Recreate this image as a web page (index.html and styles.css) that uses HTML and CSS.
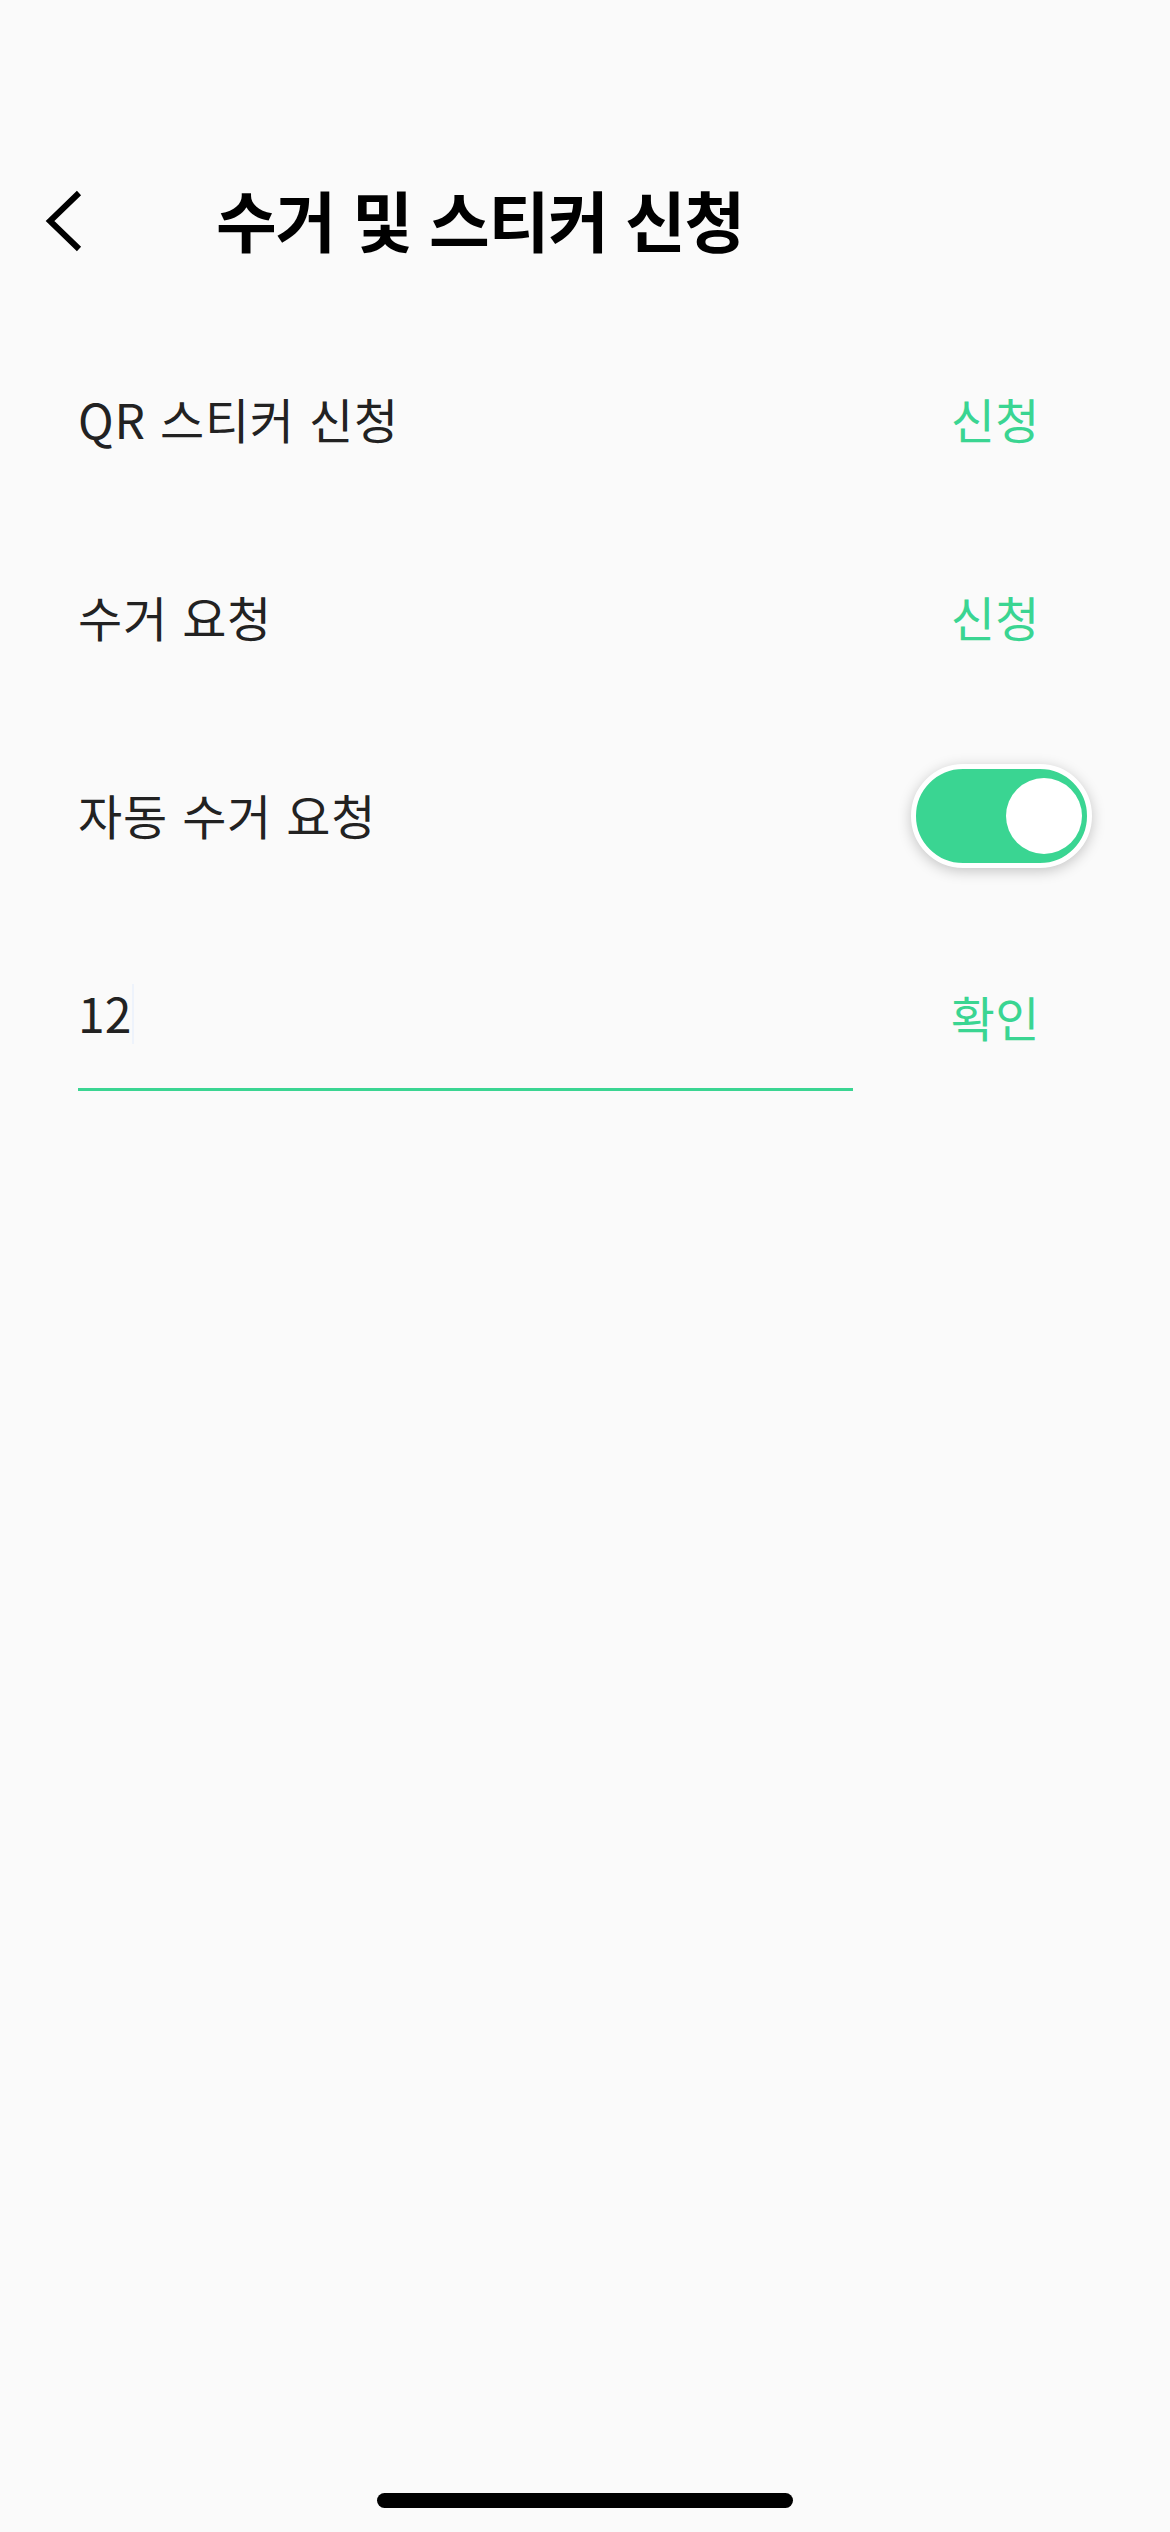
FILE: index.html
```html
<!DOCTYPE html>
<html lang="ko">
<head>
<meta charset="utf-8">
<link rel="stylesheet" href="styles.css">
</head>
<body>
<div class="screen">
  <header class="header">
    <button class="back" aria-label="뒤로">
      <svg width="40" height="62" viewBox="0 0 40 62"><polyline points="35,3 6,31 35,59" fill="none" stroke="#000" stroke-width="6"/></svg>
    </button>
    <h1 class="title">수거 및 스티커 신청</h1>
  </header>
  <main class="list">
    <div class="row">
      <span class="label">QR 스티커 신청</span>
      <span class="action">신청</span>
    </div>
    <div class="row">
      <span class="label">수거 요청</span>
      <span class="action">신청</span>
    </div>
    <div class="row toggle-row">
      <span class="label">자동 수거 요청</span>
      <span class="toggle"><span class="thumb"></span></span>
    </div>
    <div class="row input-row">
      <div class="field"><span class="value">12</span><span class="caret"></span></div>
      <span class="action">확인</span>
    </div>
  </main>
  <div class="home-bar"></div>
</div>
</body>
</html>
```

FILE: styles.css
```css
html, body {
  margin: 0;
  padding: 0;
  background: #fafafa;
}
.screen {
  width: 1170px;
  height: 2532px;
  display: flex;
  flex-direction: column;
  font-family: "Noto Sans CJK KR", "Noto Sans", sans-serif;
  color: #222;
}
.header {
  display: flex;
  align-items: center;
  padding: 186px 0 0 44px;
  height: 64px;
  margin-bottom: 69px;
}
.back {
  border: 0;
  background: none;
  padding: 0;
  width: 40px;
  height: 62px;
  display: flex;
  margin-top: 6px;
}
.title {
  margin: 0 0 0 132px;
  font-size: 66px;
  font-weight: 700;
  line-height: 64px;
  color: #000;
  letter-spacing: -1.2px;
}
.list {
  display: flex;
  flex-direction: column;
}
.row {
  height: 198px;
  display: flex;
  align-items: center;
  justify-content: space-between;
  padding: 0 78px 0 78px;
}
.label {
  font-size: 48px;
  line-height: 60px;
  letter-spacing: 0.8px;
}
.action {
  font-size: 48px;
  line-height: 60px;
  color: #3ad592;
  margin-right: 52px;
  letter-spacing: 0.5px;
}
.toggle {
  height: 94px;
  border: 5px solid #fff;
  border-radius: 52px;
  background: #3ad592;
  box-shadow: 0 3px 14px rgba(0, 0, 0, 0.22);
  display: flex;
  align-items: center;
  justify-content: flex-end;
  padding-right: 5px;
  box-sizing: content-box;
  width: 166px;
  margin-top: 4px;
}
.thumb {
  width: 76px;
  height: 76px;
  border-radius: 50%;
  background: #fff;
}
.input-row {
  height: 151px;
  margin-top: 27px;
}
.field {
  width: 775px;
  height: 148px;
  border-bottom: 3px solid #3ad592;
  display: flex;
  align-items: center;
}
.value {
  font-size: 48px;
  line-height: 60px;
  margin-top: -4px;
}
.caret {
  width: 2px;
  height: 60px;
  background: #eef3fb;
  margin-left: 1px;
}
.home-bar {
  margin: auto auto 24px auto;
  width: 416px;
  height: 15px;
  border-radius: 8px;
  background: #000;
}
```
